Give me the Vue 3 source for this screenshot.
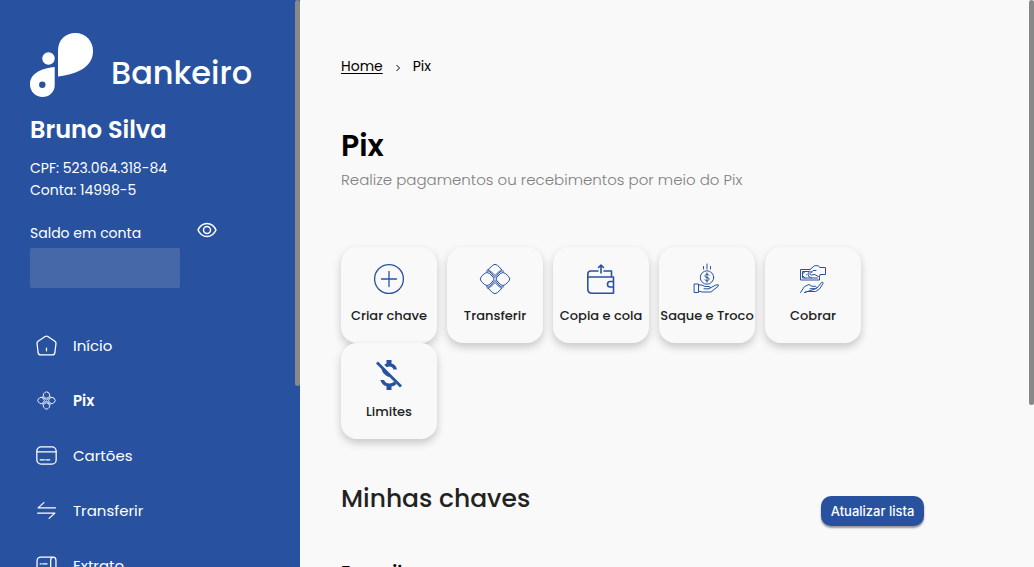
<script setup>
const menu = [
  { label: 'Início', icon: 'home' },
  { label: 'Pix', icon: 'pix', active: true },
  { label: 'Cartões', icon: 'card' },
  { label: 'Transferir', icon: 'swap' },
  { label: 'Extrato', icon: 'receipt' }
]
const actions = [
  { label: 'Criar chave', icon: 'plus' },
  { label: 'Transferir', icon: 'pix' },
  { label: 'Copia e cola', icon: 'wallet' },
  { label: 'Saque e Troco', icon: 'coin' },
  { label: 'Cobrar', icon: 'cash' },
  { label: 'Limites', icon: 'limit' }
]
</script>

<template>
  <div class="app">
    <aside class="sidebar">
      <div class="pane side-pane">
        <a class="brand" href="#">
          <svg class="logo" viewBox="0 0 63 64" aria-hidden="true">
            <path d="M28 43.500V17.500C28 7 35.500 0 45.500 0S63 8 63 18C63 33 49 41 28 43.500Z" />
            <circle cx="18.500" cy="25.500" r="6.200" />
            <path fill-rule="evenodd" d="M24.700 34V52C24.700 59.500 19 64 12.500 64S0 59 0 51.500C0 41 10 35.500 24.700 34ZM12.300 48.600a3.200 3.200 0 1 0 0 6.400a3.200 3.200 0 0 0 0-6.400Z" />
          </svg>
          <span class="brand-name">Bankeiro</span>
        </a>
        <h2 class="user">Bruno Silva</h2>
        <p class="account">CPF: 523.064.318-84</p>
        <p class="account">Conta: 14998-5</p>
        <div class="balance-head">
          <label for="balance">Saldo em conta</label>
          <button class="eye" type="button" aria-label="Mostrar saldo">
            <svg viewBox="0 0 20 16"><path d="M1 8Q4 1.500 10 1.500T19 8Q16 14.500 10 14.500T1 8Z" /><circle cx="10" cy="8" r="3.500" /></svg>
          </button>
        </div>
        <input id="balance" class="balance" type="text" readonly>
        <nav class="menu">
          <a v-for="item in menu" :key="item.label" href="#" :class="{ active: item.active }">
            <svg viewBox="0 0 20 20" aria-hidden="true">
              <path v-if="item.icon === 'home'" d="M8.700 1.400Q10 .600 11.300 1.400L18 6Q19.200 6.900 19 8.200L18 16.500Q17.700 19 15.500 19H4.500Q2.300 19 2 16.500L1 8.200Q.800 6.900 2 6ZM10 12.500V15" />
              <g v-else-if="item.icon === 'pix'" class="fine">
                <rect x="7.200" y="2" width="5.600" height="5.600" rx="2.200" transform="rotate(45 10 4.800)" />
                <rect x="2" y="7.200" width="5.600" height="5.600" rx="2.200" transform="rotate(45 4.800 10)" />
                <rect x="12.400" y="7.200" width="5.600" height="5.600" rx="2.200" transform="rotate(45 15.200 10)" />
                <rect x="7.200" y="12.400" width="5.600" height="5.600" rx="2.200" transform="rotate(45 10 15.200)" />
                <path d="M6 6.500Q7.500 6.500 8.200 8.200L10 9.500l1.800-1.300Q12.500 6.500 14 6.500M6 13.500Q7.500 13.500 8.200 11.800L10 10.500l1.800 1.300Q12.500 13.500 14 13.500" />
              </g>
              <g v-else-if="item.icon === 'card'"><rect x=".800" y="1.800" width="18.400" height="16.400" rx="4" /><path d="M1 6.500H19M4 14.200H8M9.500 14.200H13" /></g>
              <path v-else-if="item.icon === 'swap'" d="M7.500 2.500 2 7.500H18.500M1.500 12.500H18L12.500 17.500" />
              <path v-else d="M14 5V13.500H16.500Q19 13.500 19 11V5Q19 2 16.500 2H5Q1 2 1 6V19L4 17.500 7 19 10 17.500 14 19V5Q14 2 16.500 2M4 8.500H5M6.500 8.500H10.500M4 12H5M6.500 12H10.500" />
            </svg>
            <span>{{ item.label }}</span>
          </a>
        </nav>
      </div>
      <span class="thumb side-thumb" />
    </aside>

    <main class="main">
      <div class="pane main-pane">
        <div class="content">
          <nav class="crumbs" aria-label="Breadcrumb">
            <a href="#">Home</a>
            <svg viewBox="0 0 6 8" aria-hidden="true"><path d="M1.500 1 4.500 4 1.500 7" /></svg>
            <span>Pix</span>
          </nav>
          <h1>Pix</h1>
          <p class="lead">Realize pagamentos ou recebimentos por meio do Pix</p>
          <div class="cards">
            <button v-for="item in actions" :key="item.label" type="button" class="card">
              <svg viewBox="0 0 32 32" aria-hidden="true">
                <g v-if="item.icon === 'plus'"><circle cx="16" cy="16" r="14.400" /><path d="M16 8.500V23.500M8.500 16H23.500" /></g>
                <g v-else-if="item.icon === 'pix'" class="fine">
                  <path d="M9 6.800 13.500 2.400Q16 .200 18.500 2.400L23 6.800Q21.500 7 20.500 8L16 12.500L11.500 8Q10.500 7 9 6.800Z" />
                  <path d="M9 25.200 13.500 29.600Q16 31.800 18.500 29.600L23 25.200Q21.500 25 20.500 24L16 19.500L11.500 24Q10.500 25 9 25.200Z" />
                  <path d="M5.500 10.500Q8 8.300 10.500 10.500L14 14Q16 16 14 18L10.500 21.500Q8 23.700 5.500 21.500L2.300 18.500Q0 16 2.300 13.500Z" />
                  <path d="M26.500 10.500Q24 8.300 21.500 10.500L18 14Q16 16 18 18L21.500 21.500Q24 23.700 26.500 21.500L29.700 18.500Q32 16 29.700 13.500Z" />
                  <path d="M7.500 8Q9.500 7.500 11 9L16 14.500L21 9Q22.500 7.500 24.500 8M7.500 24Q9.500 24.500 11 23L16 17.500L21 23Q22.500 24.500 24.500 24" />
                </g>
                <g v-else-if="item.icon === 'wallet'" class="heavy">
                  <path d="M13 8H6Q2.800 8 2.800 11V26Q2.800 30.200 7 30.200H28.500V14H3M19 8H26.500V14M28.500 18.500H25Q22.500 18.500 22.500 21.200T25 24H28.500M16 10V2M13.500 4.500 16 2 18.500 4.500" />
                </g>
                <g v-else-if="item.icon === 'coin'" class="fine">
                  <circle cx="16" cy="14.500" r="6.700" />
                  <path d="M18 12.300Q17.500 11.200 16 11.200T14 12.700T16 14.500T18 16.300T16 17.900T14 16.700M16 9.800V19.200M16 1V6M12.500 3.500V6M19.500 3.500V6" />
                  <path d="M3.500 21H7.500V29.500H3.500ZM7.500 22H11L14 23.500H18Q20 24 18.500 25.800H13M19 25 25 22Q28 21 27.500 23L20 29H11L7.500 28" />
                </g>
                <g v-else-if="item.icon === 'cash'" class="fine">
                  <path d="M13 6.500H3.500V17H22.500V13.500M12 8.500H5.500V15H20.500" />
                  <path d="M8 8.500Q7.500 10.300 5.500 10.500M8 15Q7.500 13.300 5.500 13M9.500 11.800H9.600M14.500 15Q10.500 14 11 11T15 9M17.500 11.500 14.500 12Q12.500 12 13 10.500L16 7.500H19M17.500 11.500 21.500 13.500Q23.500 13 23 11.500H28.500V4.500H23L21 2.700H17.500L13 6.500" />
                  <path d="M3.500 29.500 7.500 23.500 12 21.500 15 23.300H18.500Q20.500 24 18.500 25.700H13M20 25 24.500 19.500Q26.500 18.500 26 20.500L22.500 26 18.500 28.500H10L7.500 29.500Z" />
                </g>
                <g v-else class="solid">
                  <path d="M13.500 1H18.500V4.500Q23 5.500 24 10.500H20.500Q19.500 7.500 16.500 7.500Q15 7.500 13.800 8.200L11.300 5.700Q12.300 4.800 13.500 4.500ZM7.300 21H11Q12.500 24.500 16.500 24.500Q19.500 24.500 21 22.500L23.500 25Q21.500 27 18.500 27.500V31H13.500V27.300Q9 26.200 7.300 21ZM8.500 9.500 17 16.500 15.500 18Q9 15 8.500 9.500Z" />
                  <path d="M3 4.500 5 2.500 29 26.500 27 28.500Z" />
                </g>
              </svg>
              <span>{{ item.label }}</span>
            </button>
          </div>
          <div class="keys-head">
            <h2>Minhas chaves</h2>
            <button type="button" class="refresh">Atualizar lista</button>
          </div>
          <h3>E-mail</h3>
        </div>
      </div>
      <span class="thumb main-thumb" />
    </main>
  </div>
</template>

<style>
body { margin: 0; }
</style>

<style scoped>
* { box-sizing: border-box; }
h1, h2, h3, p { margin: 0; }
a { color: inherit; text-decoration: none; }
button { font-family: inherit; border: 0; cursor: pointer; }
.app { display: flex; height: 100vh; background: #f9f9f9; font-family: Poppins, Inter, sans-serif; font-size: 15px; color: #000; }
.pane { height: 100%; overflow-y: auto; scrollbar-width: none; }
.thumb { position: absolute; top: 0; right: 0; width: 5px; background: #888; border-radius: 3px; }
.side-thumb { height: 68%; }
.main-thumb { height: 71.400%; }
.sidebar { position: relative; flex: 0 0 300px; background: #2852a0; color: #fff; }
.side-pane { padding: 33px 30px; }
.brand { display: flex; gap: 18px; height: 64px; }
.logo { width: 63px; height: 64px; fill: #fff; }
.brand-name { font-size: 32px; line-height: 40px; padding-top: 20px; font-weight: 500; }
.user { margin-top: 15px; font-size: 24px; line-height: 36px; font-weight: 600; }
.account { font-size: 14px; line-height: 22px; }
.user + .account { margin-top: 9px; }
.balance-head { display: flex; gap: 56px; margin-top: 21px; height: 26px; line-height: 22px; font-size: 14px; }
.eye { width: 20px; height: 16px; padding: 0; background: none; }
.eye svg { display: block; fill: none; stroke: #fff; stroke-width: 1.500; }
.balance { display: block; width: 150px; height: 40px; border: 0; border-radius: 2px; padding: 0 8px; background: #4768a8; color: #fff; }
.menu { margin-top: 30px; }
.menu a { display: flex; align-items: center; gap: 16px; height: 55px; padding-left: 6px; }
.menu svg { width: 21px; height: 21px; fill: none; stroke: #fff; stroke-width: 1.200; stroke-linecap: round; stroke-linejoin: round; }
.menu .fine { stroke-width: .800; }
.menu .active span { font-weight: 600; }
.main { position: relative; flex: 1; min-width: 0; }
.main-pane { padding: 55px 5px 48px 41px; }
.content { width: 84.800%; }
.crumbs { display: flex; align-items: center; gap: 12px; font-size: 14px; line-height: 22px; }
.crumbs a { text-decoration: underline; text-underline-offset: 2px; }
.crumbs svg { width: 6px; height: 8px; margin-top: 3px; fill: none; stroke: #000; }
h1 { margin-top: 47px; font-size: 30px; line-height: 44px; font-weight: 600; }
.lead { margin-top: 1px; line-height: 22px; font-weight: 300; color: #808080; white-space: nowrap; }
.cards { display: flex; flex-wrap: wrap; column-gap: 10px; margin-top: 56px; }
.card { display: flex; flex-direction: column; align-items: center; width: 96px; height: 96px; padding: 16px 0 0; border-radius: 16px; background: #f9f9f9; box-shadow: 0 4px 8px rgba(0, 0, 0, .2); color: #222; font-size: 13px; line-height: 20px; font-weight: 500; }
.card svg { width: 32px; height: 32px; margin-bottom: 11px; fill: none; stroke: #2852a0; stroke-width: 1.300; stroke-linecap: round; stroke-linejoin: round; }
.card .heavy { stroke-width: 1.600; }
.card .fine { stroke-width: 1; }
.card .solid { fill: #2852a0; stroke: none; }
.card span { white-space: nowrap; }
.keys-head { display: flex; justify-content: space-between; margin-top: 41px; }
.keys-head h2 { font-size: 25px; line-height: 38px; font-weight: 500; color: #222; }
.refresh { height: 30px; margin-top: 16px; padding: 0 10px; border-radius: 10px; background: #2852a0; color: #fff; font: 500 13px Inter, sans-serif; box-shadow: 0 2px 2px rgba(0, 0, 0, .4); }
h3 { margin-top: 32px; font-size: 18px; line-height: 28px; font-weight: 600; }
</style>
